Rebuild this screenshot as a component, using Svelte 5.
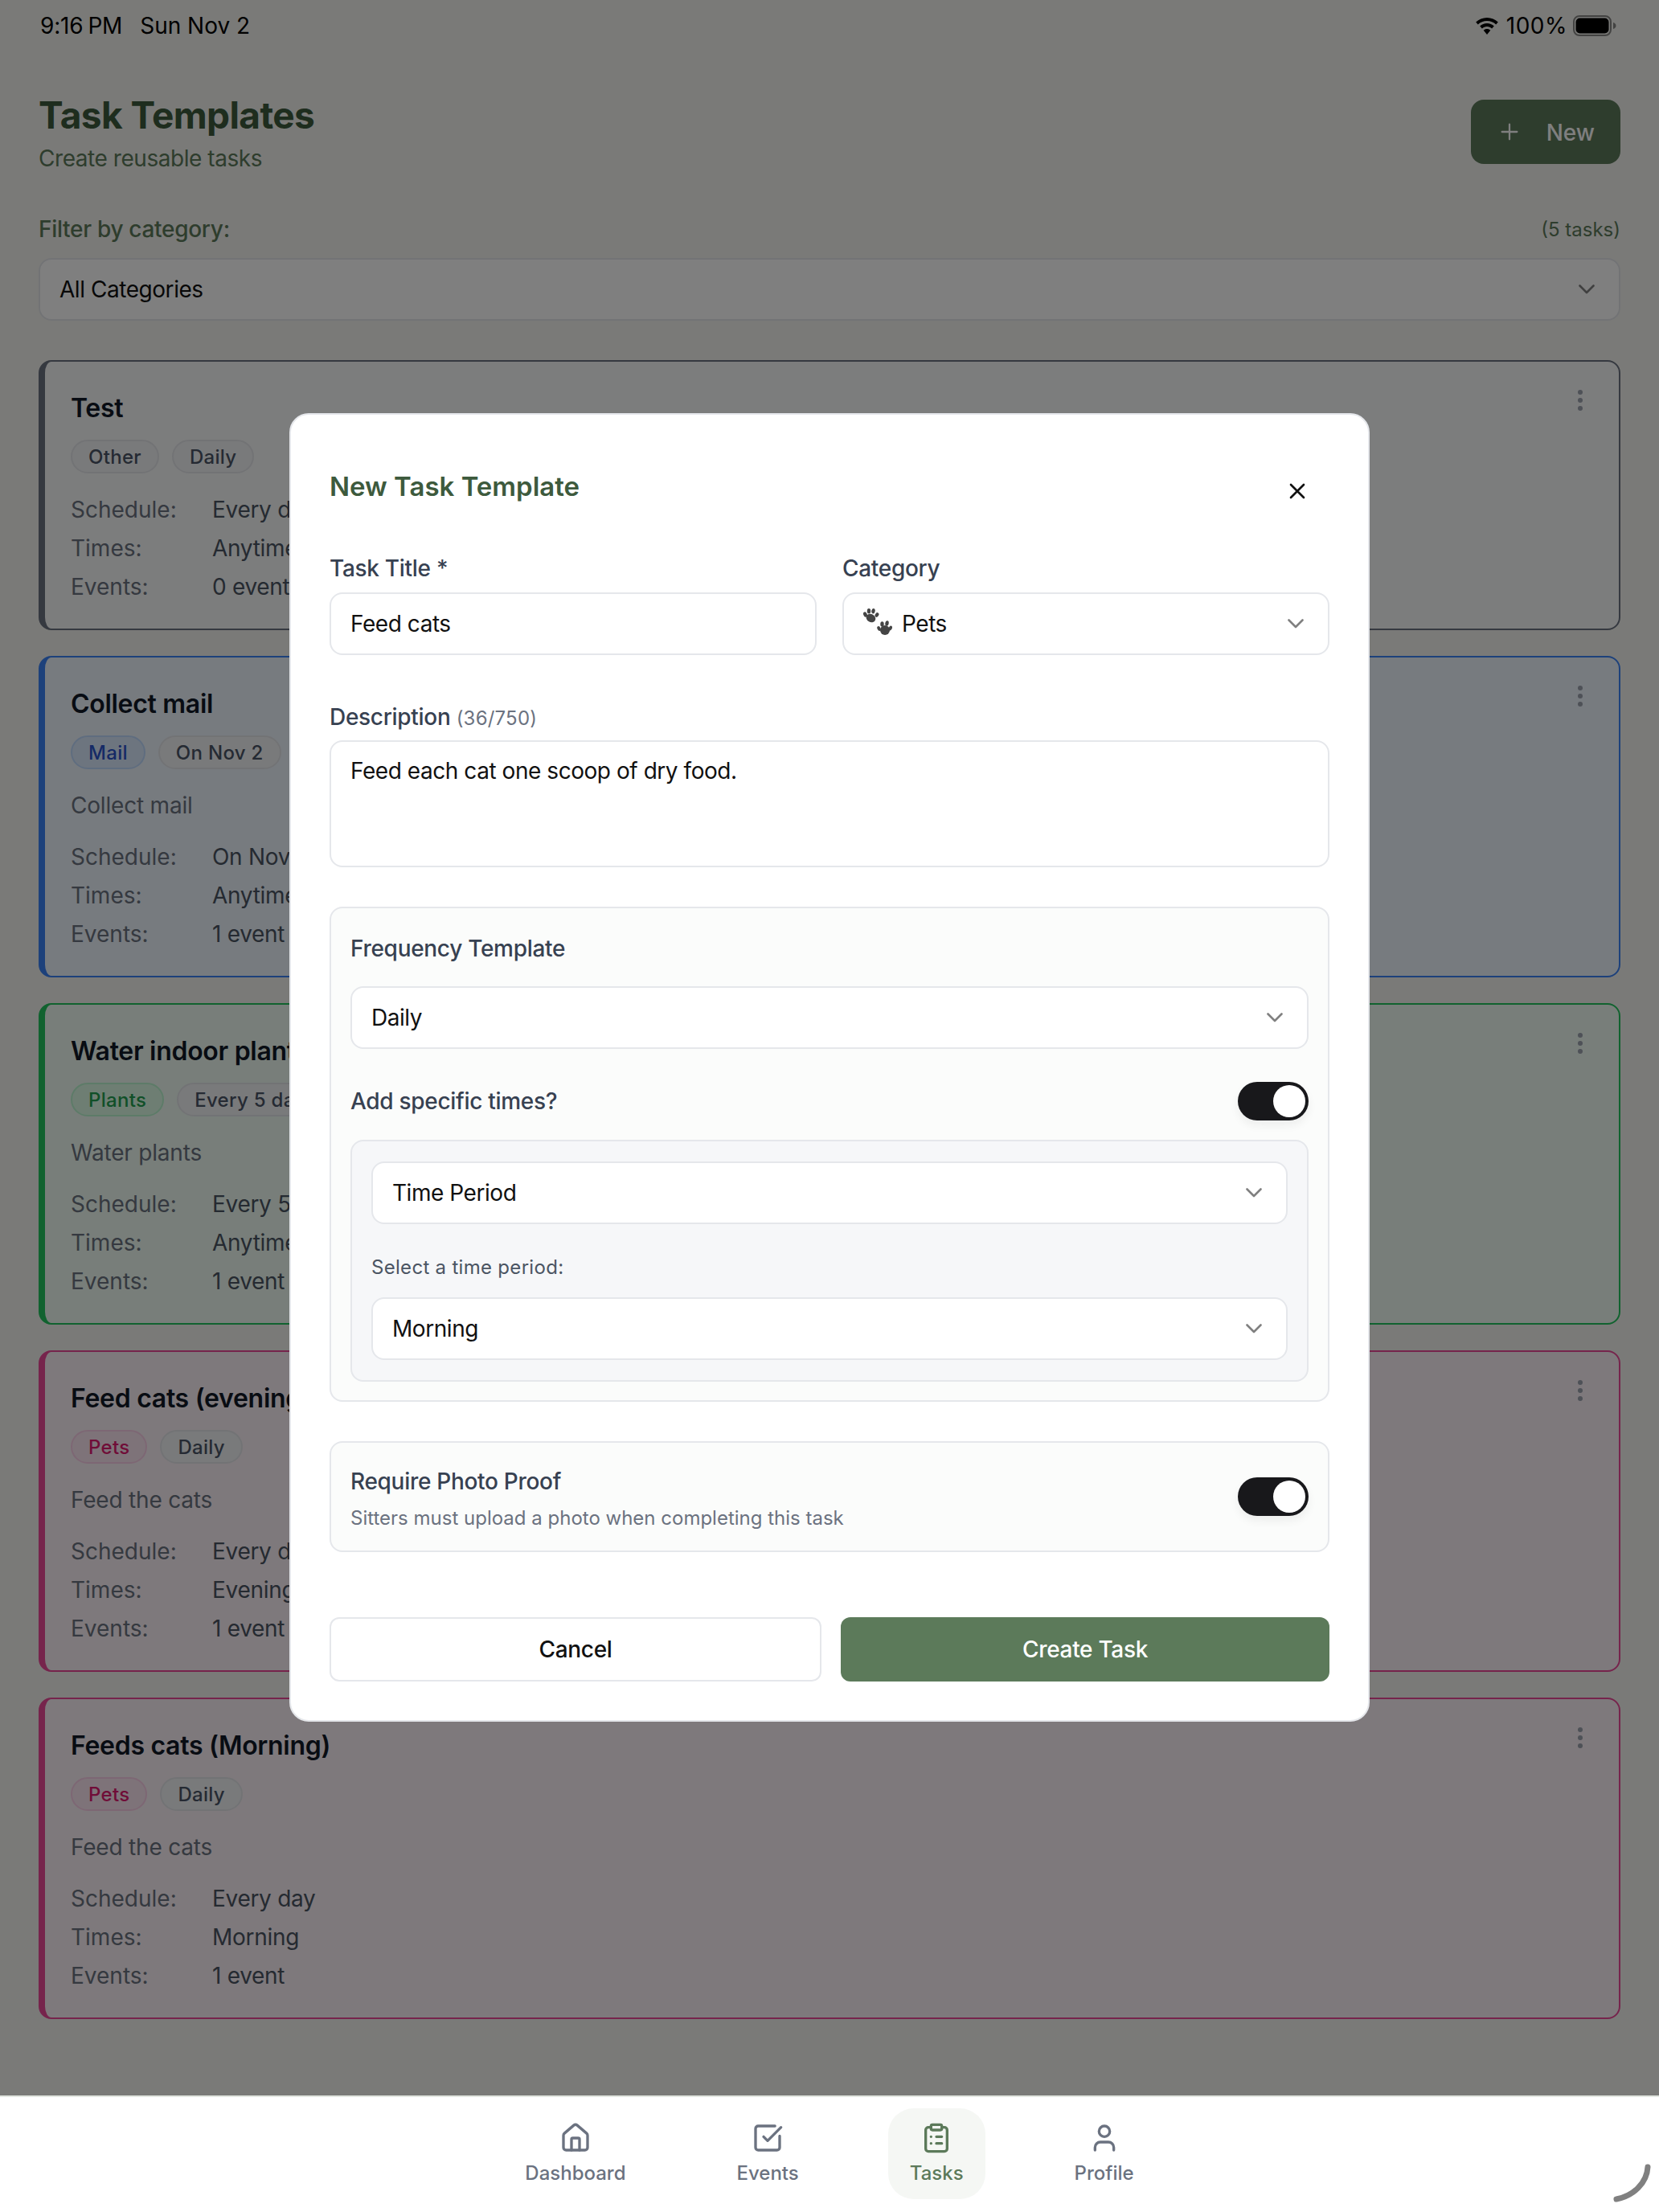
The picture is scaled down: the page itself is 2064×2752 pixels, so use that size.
<script lang="ts">
  type Card = {
    title: string;
    tone: string;
    category: string;
    freq: string;
    desc?: string;
    schedule: string;
    times: string;
    events: string;
  };

  const cards: Card[] = [
    { title: 'Test', tone: 'gray', category: 'Other', freq: 'Daily', schedule: 'Every day', times: 'Anytime', events: '0 events' },
    { title: 'Collect mail', tone: 'blue', category: 'Mail', freq: 'On Nov 2', desc: 'Collect mail', schedule: 'On Nov 2', times: 'Anytime', events: '1 event' },
    { title: 'Water indoor plants', tone: 'green', category: 'Plants', freq: 'Every 5 days', desc: 'Water plants', schedule: 'Every 5 days', times: 'Anytime', events: '1 event' },
    { title: 'Feed cats (evening)', tone: 'pink', category: 'Pets', freq: 'Daily', desc: 'Feed the cats', schedule: 'Every day', times: 'Evening', events: '1 event' },
    { title: 'Feeds cats (Morning)', tone: 'pink', category: 'Pets', freq: 'Daily', desc: 'Feed the cats', schedule: 'Every day', times: 'Morning', events: '1 event' }
  ];
</script>

{#snippet chevron()}
  <svg class="chev" width="20" height="12" viewBox="0 0 20 12" fill="none" stroke="currentColor" stroke-width="2.6" stroke-linecap="round" stroke-linejoin="round"><path d="M1.5 1.5 10 10l8.5-8.5" /></svg>
{/snippet}

{#snippet toggle()}
  <span class="toggle"><span class="knob"></span></span>
{/snippet}

<div class="screen">
  <main class="page">
    <div class="status">
      <div class="status-left">
        <span class="clock">9:16<span class="pm">PM</span></span>
        <span>Sun Nov 2</span>
      </div>
      <div class="status-right">
        <svg width="28" height="21" viewBox="0 0 28 21" fill="#000"><path d="M14 0C8.6 0 3.8 2.1.2 5.6l2.6 2.9C5.7 5.7 9.7 4 14 4s8.3 1.7 11.2 4.5l2.6-2.9C24.2 2.1 19.4 0 14 0z" /><path d="M14 7c-3.4 0-6.5 1.3-8.8 3.500l2.7 3C9.5 12 11.6 11 14 11s4.500 1 6.100 2.500l2.700-3C20.500 8.300 17.400 7 14 7z" /><path d="M14 14c-1.700 0-3.200.6-4.300 1.700L14 21l4.300-5.300C17.200 14.600 15.700 14 14 14z" /></svg>
        <span class="pct">100%</span>
        <svg width="54" height="26" viewBox="0 0 54 26"><rect x="1" y="1" width="46" height="24" rx="7" fill="none" stroke="#000" stroke-opacity="0.45" stroke-width="2" /><rect x="3.5" y="3.5" width="41" height="19" rx="5" fill="#000" /><path d="M50 9c2 .6 3.5 2 3.5 4s-1.5 3.4-3.5 4z" fill="#000" fill-opacity="0.45" /></svg>
      </div>
    </div>

    <div class="content">
      <header class="head">
        <div>
          <h1>Task Templates</h1>
          <p class="sub">Create reusable tasks</p>
        </div>
        <button type="button" class="new">
          <svg width="32" height="32" viewBox="0 0 24 24" fill="none" stroke="currentColor" stroke-width="1.7" stroke-linecap="round"><path d="M5 12h14M12 5v14" /></svg>
          <span class="new-text">New</span>
        </button>
      </header>

      <div class="filter-row">
        <span class="filter-label">Filter by category:</span>
        <span class="count">(5 tasks)</span>
      </div>
      <div class="select page-select"><span>All Categories</span>{@render chevron()}</div>

      <div class="cards">
        {#each cards as c (c.title)}
          <article class="card {c.tone}">
            <div class="card-top">
              <h3>{c.title}</h3>
              <svg class="kebab" width="12" height="28" viewBox="0 0 12 28" fill="currentColor"><circle cx="6" cy="4" r="3" /><circle cx="6" cy="14" r="3" /><circle cx="6" cy="24" r="3" /></svg>
            </div>
            <div class="chips">
              <span class="chip cat">{c.category}</span>
              <span class="chip">{c.freq}</span>
            </div>
            {#if c.desc}<p class="desc">{c.desc}</p>{/if}
            <dl class:tight={!!c.desc}>
              <dt>Schedule:</dt><dd>{c.schedule}</dd>
              <dt>Times:</dt><dd>{c.times}</dd>
              <dt>Events:</dt><dd>{c.events}</dd>
            </dl>
          </article>
        {/each}
      </div>
    </div>

    <div class="overlay">
      <div class="modal">
        <div class="modal-head">
          <h2>New Task Template</h2>
          <svg class="close" width="32" height="32" viewBox="0 0 24 24" fill="none" stroke="#111" stroke-width="2" stroke-linecap="round"><path d="M18 6 6 18M6 6l12 12" /></svg>
        </div>

        <div class="two">
          <div>
            <div class="lbl">Task Title *</div>
            <div class="select"><span>Feed cats</span></div>
          </div>
          <div>
            <div class="lbl">Category</div>
            <div class="select">
              <span class="pets">
                <svg width="36" height="34" viewBox="0 0 36 34" fill="#444">
                  <ellipse cx="9.5" cy="12" rx="6" ry="5" transform="rotate(30 9.5 12)" /><ellipse cx="2.5" cy="7.5" rx="2.2" ry="3.2" transform="rotate(-25 2.5 7.5)" /><ellipse cx="7" cy="3.2" rx="2.2" ry="3.2" /><ellipse cx="12.5" cy="3.2" rx="2.2" ry="3.2" transform="rotate(10 12.5 3.2)" /><ellipse cx="17" cy="8" rx="2.2" ry="3" transform="rotate(30 17 8)" />
                  <ellipse cx="27" cy="27" rx="6" ry="6" /><ellipse cx="19.5" cy="25" rx="2" ry="3" transform="rotate(-25 19.5 25)" /><ellipse cx="23.5" cy="19.5" rx="2.2" ry="3.2" /><ellipse cx="29.5" cy="18.5" rx="2.2" ry="3.2" transform="rotate(10 29.5 18.5)" /><ellipse cx="33.8" cy="24.5" rx="2" ry="3" transform="rotate(25 33.8 24.5)" />
                </svg>
                Pets
              </span>
              {@render chevron()}
            </div>
          </div>
        </div>

        <div class="lbl desc-lbl">Description <small>(36/750)</small></div>
        <div class="textarea">Feed each cat one scoop of dry food.</div>

        <section class="panel freq">
          <div class="lbl">Frequency Template</div>
          <div class="select"><span>Daily</span>{@render chevron()}</div>
          <div class="toggle-row">
            <span class="lbl flat">Add specific times?</span>
            {@render toggle()}
          </div>
          <div class="panel inner">
            <div class="select"><span>Time Period</span>{@render chevron()}</div>
            <div class="period-lbl">Select a time period:</div>
            <div class="select"><span>Morning</span>{@render chevron()}</div>
          </div>
        </section>

        <section class="panel photo">
          <div class="photo-text">
            <div class="lbl flat">Require Photo Proof</div>
            <div class="hint">Sitters must upload a photo when completing this task</div>
          </div>
          {@render toggle()}
        </section>

        <div class="actions">
          <button type="button" class="cancel">Cancel</button>
          <button type="button" class="create">Create Task</button>
        </div>
      </div>
    </div>
  </main>

  <nav class="tabs">
    <div class="tab">
      <svg width="40" height="40" viewBox="0 0 24 24" fill="none" stroke="currentColor" stroke-width="2" stroke-linecap="round" stroke-linejoin="round"><path d="M15 21v-8a1 1 0 0 0-1-1h-4a1 1 0 0 0-1 1v8" /><path d="M3 10a2 2 0 0 1 .709-1.528l7-5.999a2 2 0 0 1 2.582 0l7 5.999A2 2 0 0 1 21 10v9a2 2 0 0 1-2 2H5a2 2 0 0 1-2-2z" /></svg>
      Dashboard
    </div>
    <div class="tab">
      <svg width="40" height="40" viewBox="0 0 24 24" fill="none" stroke="currentColor" stroke-width="2" stroke-linecap="round" stroke-linejoin="round"><path d="M21 10.5V19a2 2 0 0 1-2 2H5a2 2 0 0 1-2-2V5a2 2 0 0 1 2-2h12.5" /><path d="m9 11 3 3L22 4" /></svg>
      Events
    </div>
    <div class="tab active">
      <svg width="40" height="40" viewBox="0 0 24 24" fill="none" stroke="currentColor" stroke-width="2" stroke-linecap="round" stroke-linejoin="round"><rect x="8" y="2" width="8" height="4" rx="1" /><path d="M16 4h2a2 2 0 0 1 2 2v14a2 2 0 0 1-2 2H6a2 2 0 0 1-2-2V6a2 2 0 0 1 2-2h2" /><path d="M12 11h4M12 16h4M8 11h.01M8 16h.01" /></svg>
      Tasks
    </div>
    <div class="tab">
      <svg width="40" height="40" viewBox="0 0 24 24" fill="none" stroke="currentColor" stroke-width="2" stroke-linecap="round" stroke-linejoin="round"><path d="M19 21v-2a4 4 0 0 0-4-4H9a4 4 0 0 0-4 4v2" /><circle cx="12" cy="7" r="4" /></svg>
      Profile
    </div>
    <svg class="corner" width="48" height="48" viewBox="0 0 48 48" fill="none" stroke="#808080" stroke-width="7" stroke-linecap="round"><path d="M44 4C43 24 26 40 5 44" /></svg>
  </nav>
</div>

<style>
  :global(body) {
    margin: 0;
    background: #f5f5f1;
  }
  .screen {
    width: 2064px;
    height: 2752px;
    display: flex;
    flex-direction: column;
    font-family: Inter, 'Liberation Sans', sans-serif;
    overflow: hidden;
  }
  .page {
    position: relative;
    flex: 1;
    min-height: 0;
  }
  .status {
    height: 64px;
    display: flex;
    justify-content: space-between;
    align-items: center;
    padding: 0 53px 0 50px;
    font-size: 28px;
    color: #000;
  }
  .status-left {
    display: flex;
    gap: 22px;
  }
  .clock {
    letter-spacing: -0.2px;
  }
  .pm {
    margin-left: 6px;
  }
  .status-right {
    display: flex;
    align-items: center;
    gap: 10px;
  }
  .pct {
    letter-spacing: 0.5px;
    margin-right: -3px;
  }
  .content {
    padding: 49px 48px 0;
  }
  .head {
    display: flex;
    justify-content: space-between;
    align-items: flex-start;
  }
  h1 {
    margin: 0;
    font-size: 46px;
    line-height: 60px;
    font-weight: 700;
    color: #3d5a3d;
    letter-spacing: -0.6px;
  }
  .sub {
    margin: 5px 0 0;
    font-size: 28px;
    line-height: 38px;
    color: #5c7a5a;
    letter-spacing: -0.45px;
  }
  .new {
    height: 80px;
    margin-top: 11px;
    display: flex;
    align-items: center;
    gap: 30px;
    padding: 0 32px;
    border: 0;
    border-radius: 16px;
    background: #5c7a5a;
    color: #fff;
    font: 500 28px Inter, sans-serif;
  }
  .new-text {
    margin-top: 2px;
  }
  .filter-row {
    display: flex;
    justify-content: space-between;
    align-items: center;
    margin-top: 49px;
    height: 40px;
  }
  .filter-label {
    font-size: 28px;
    font-weight: 500;
    color: #5c7a5a;
    letter-spacing: -0.3px;
  }
  .count {
    font-size: 24px;
    color: #5c7a5a;
  }
  .select {
    box-sizing: border-box;
    height: 78px;
    display: flex;
    justify-content: space-between;
    align-items: center;
    padding: 0 30px 0 24px;
    background: #fff;
    border: 2px solid #e5e7eb;
    border-radius: 16px;
    font-size: 28px;
    color: #111;
    letter-spacing: -0.45px;
  }
  .chev {
    color: #808080;
  }
  .page-select {
    margin-top: 16px;
  }
  .cards {
    margin-top: 49px;
    display: flex;
    flex-direction: column;
    gap: 32px;
  }
  .card {
    border: 2px solid #6b7280;
    border-left-width: 8px;
    border-radius: 16px;
    padding: 32px;
  }
  .card.gray {
    background: #f9fafb;
    border-color: #6b7280;
  }
  .card.blue {
    background: #eff6ff;
    border-color: #3b82f6;
  }
  .card.green {
    background: #f0fdf4;
    border-color: #22c55e;
  }
  .card.pink {
    background: #fdf2f8;
    border-color: #ec4899;
  }
  .card-top {
    display: flex;
    justify-content: space-between;
    align-items: flex-start;
    height: 50px;
  }
  h3 {
    margin: 1px 0 0;
    font-size: 32px;
    line-height: 50px;
    font-weight: 600;
    color: #111827;
    letter-spacing: -0.3px;
  }
  .kebab {
    color: #9ca3af;
    margin-right: 10px;
    margin-top: 2px;
  }
  .chips {
    display: flex;
    gap: 16px;
    margin-top: 15px;
  }
  .chip {
    box-sizing: border-box;
    height: 42px;
    display: flex;
    align-items: center;
    padding: 0 20px;
    border: 2px solid #e5e7eb;
    border-radius: 21px;
    background: #f3f4f6;
    color: #4a5466;
    font-size: 24px;
    font-weight: 500;
    letter-spacing: 0.3px;
  }
  .blue .cat {
    background: #dbeafe;
    border-color: #bfdbfe;
    color: #2a55cc;
  }
  .green .cat {
    background: #dcfce7;
    border-color: #bbf7d0;
    color: #22a050;
  }
  .pink .cat {
    background: #fce7f3;
    border-color: #fbcfe8;
    color: #e01a70;
  }
  .desc {
    margin: 25px 0 0;
    font-size: 28px;
    line-height: 40px;
    color: #6b7280;
    letter-spacing: -0.2px;
  }
  dl {
    display: grid;
    grid-template-columns: 176px 1fr;
    row-gap: 8px;
    margin: 25px 0 0;
    font-size: 28px;
    line-height: 40px;
  }
  dl.tight {
    margin-top: 24px;
  }
  dt {
    color: #6b7280;
  }
  dd {
    margin: 0;
    color: #4b5563;
    letter-spacing: -0.3px;
  }

  .overlay {
    position: absolute;
    inset: 0;
    background: rgba(0, 0, 0, 0.5);
    display: flex;
    justify-content: center;
    align-items: flex-start;
    padding-top: 514px;
  }
  .modal {
    box-sizing: border-box;
    width: 1344px;
    height: 1628px;
    padding: 48px;
    background: #fff;
    border: 2px solid #e5e7eb;
    border-radius: 24px;
  }
  .modal-head {
    display: flex;
    justify-content: space-between;
    align-items: center;
    height: 90px;
    padding-right: 24px;
  }
  h2 {
    margin: 0 0 8px;
    font-size: 33px;
    font-weight: 600;
    color: #3d5a3d;
  }
  .close {
    margin-top: 3px;
  }
  .two {
    display: grid;
    grid-template-columns: 1fr 1fr;
    gap: 32px;
    margin-top: 33px;
  }
  .lbl {
    font-size: 28px;
    line-height: 40px;
    font-weight: 500;
    color: #374151;
    margin-bottom: 10px;
    letter-spacing: -0.3px;
  }
  .lbl.flat {
    margin: 0;
  }
  small {
    font-size: 24px;
    font-weight: 400;
    color: #6b7280;
    letter-spacing: 0.2px;
  }
  .pets {
    display: flex;
    align-items: center;
    gap: 12px;
  }
  .pets svg {
    margin-top: -4px;
  }
  .desc-lbl {
    margin-top: 57px;
    margin-bottom: 7px;
  }
  .textarea {
    box-sizing: border-box;
    height: 158px;
    padding: 17px 24px;
    border: 2px solid #e5e7eb;
    border-radius: 16px;
    font-size: 28px;
    line-height: 38px;
    color: #111;
    letter-spacing: -0.45px;
  }
  .panel {
    border: 2px solid #e5e7eb;
    border-radius: 16px;
  }
  .freq {
    margin-top: 49px;
    height: 616px;
    box-sizing: border-box;
    padding: 30px 24px 24px;
    background: #fbfcfb;
  }
  .freq > .lbl {
    margin-bottom: 27px;
  }
  .toggle-row {
    display: flex;
    justify-content: space-between;
    align-items: center;
    margin-top: 41px;
    height: 48px;
  }
  .toggle {
    box-sizing: border-box;
    width: 88px;
    height: 48px;
    display: flex;
    justify-content: flex-end;
    padding: 4px;
    border-radius: 24px;
    background: #18181b;
    box-shadow: 0 6px 12px rgba(0, 0, 0, 0.06);
  }
  .knob {
    width: 40px;
    height: 40px;
    border-radius: 50%;
    background: #fff;
  }
  .inner {
    margin-top: 24px;
    padding: 25px 24px;
    background: #f6f7f9;
  }
  .period-lbl {
    margin: 34px 0 17px;
    font-size: 24px;
    line-height: 40px;
    font-weight: 400;
    color: #4b5563;
    letter-spacing: 0.3px;
  }
  .photo {
    margin-top: 49px;
    height: 138px;
    box-sizing: border-box;
    padding: 0 24px;
    display: flex;
    justify-content: space-between;
    align-items: center;
    background: #fbfcfb;
  }
  .photo-text {
    padding-top: 6px;
  }
  .hint {
    margin-top: 8px;
    font-size: 24px;
    line-height: 36px;
    color: #6b7280;
  }
  .actions {
    display: flex;
    gap: 24px;
    margin-top: 81px;
  }
  .actions button {
    flex: 1;
    height: 80px;
    border-radius: 12px;
    font: 500 28px Inter, sans-serif;
    letter-spacing: -0.3px;
  }
  .cancel {
    background: #fff;
    border: 2px solid #e5e7eb;
    color: #111;
  }
  .create {
    background: #5c7a5a;
    border: 0;
    color: #fff;
  }

  .tabs {
    position: relative;
    z-index: 2;
    box-sizing: border-box;
    height: 145px;
    display: flex;
    justify-content: center;
    gap: 84px;
    padding-top: 14px;
    background: #fff;
    border-top: 2px solid #e2e6e0;
  }
  .tab {
    box-sizing: border-box;
    height: 113px;
    display: flex;
    flex-direction: column;
    align-items: center;
    padding: 17px 27px 0;
    gap: 8px;
    border-radius: 32px;
    font-size: 24px;
    font-weight: 500;
    color: #6b7280;
    line-height: 32px;
  }
  .tab.active {
    background: #f5f7f4;
    color: #5c7a5a;
  }
  .corner {
    position: absolute;
    right: 10px;
    bottom: 12px;
  }
</style>
